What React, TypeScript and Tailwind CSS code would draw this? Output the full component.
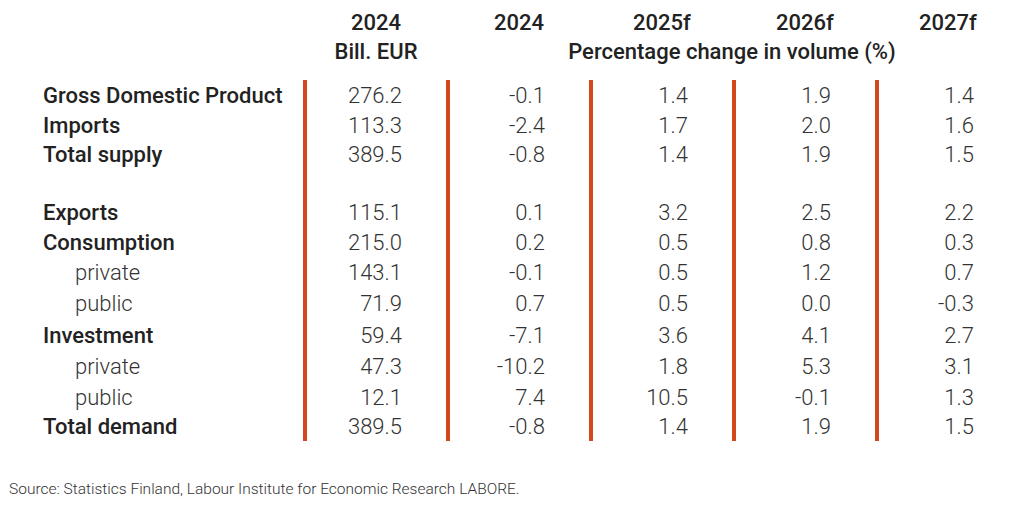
import React from "react";

type Row = {
  label: string;
  sub?: boolean;
  h: string;
  values: string[];
};

const rows: (Row | null)[] = [
  { label: "Gross Domestic Product", h: "h-[31px]", values: ["276.2", "-0.1", "1.4", "1.9", "1.4"] },
  { label: "Imports", h: "h-[29px]", values: ["113.3", "-2.4", "1.7", "2.0", "1.6"] },
  { label: "Total supply", h: "h-[29px]", values: ["389.5", "-0.8", "1.4", "1.9", "1.5"] },
  null, // tyhjä väli
  { label: "Exports", h: "h-[29px]", values: ["115.1", "0.1", "3.2", "2.5", "2.2"] },
  { label: "Consumption", h: "h-[30px]", values: ["215.0", "0.2", "0.5", "0.8", "0.3"] },
  { label: "private", sub: true, h: "h-[31px]", values: ["143.1", "-0.1", "0.5", "1.2", "0.7"] },
  { label: "public", sub: true, h: "h-[31px]", values: ["71.9", "0.7", "0.5", "0.0", "-0.3"] },
  { label: "Investment", h: "h-[32px]", values: ["59.4", "-7.1", "3.6", "4.1", "2.7"] },
  { label: "private", sub: true, h: "h-[31px]", values: ["47.3", "-10.2", "1.8", "5.3", "3.1"] },
  { label: "public", sub: true, h: "h-[30px]", values: ["12.1", "7.4", "10.5", "-0.1", "1.3"] },
  { label: "Total demand", h: "h-[29px]", values: ["389.5", "-0.8", "1.4", "1.9", "1.5"] },
];

const years = ["2024", "2024", "2025f", "2026f", "2027f"];

export default function App() {
  return (
    <div
      className="w-[1024px] h-[506px] bg-white overflow-hidden text-[#222]"
      style={{ fontFamily: "Roboto, 'Liberation Sans', sans-serif" }}
    >
      {/* otsikot */}
      <div className="grid grid-cols-[303px_repeat(5,143px)] pt-[8px] text-[22px] leading-[29px] font-medium">
        <div />
        {years.map((y, i) => (
          <div key={i} className="text-center pl-[3px]">
            {y}
          </div>
        ))}
        <div />
        <div className="text-center pl-[3px]">Bill. EUR</div>
        <div className="col-span-4 text-center">Percentage change in volume (%)</div>
      </div>

      {/* taulukko */}
      <div className="grid grid-cols-[303px_repeat(5,143px)] mt-[14px] text-[22px]">
        {rows.map((row, r) =>
          row ? (
            <React.Fragment key={r}>
              <div
                className={`${row.h} flex items-center ${
                  row.sub ? "pl-[75px] font-light text-[#333]" : "pl-[43px] font-medium"
                }`}
              >
                {row.label}
              </div>
              {row.values.map((v, c) => (
                <div
                  key={c}
                  className={`${row.h} flex items-center justify-end pr-[44px] border-l-4 border-[#d2471b] font-light text-[#333]`}
                >
                  {v}
                </div>
              ))}
            </React.Fragment>
          ) : (
            <React.Fragment key={r}>
              <div className="h-[29px]" />
              {years.map((_, c) => (
                <div key={c} className="h-[29px] border-l-4 border-[#d2471b]" />
              ))}
            </React.Fragment>
          )
        )}
      </div>

      <div className="mt-[38px] pl-[9px] text-[15.5px] leading-[20px] font-light text-[#333]">
        Source: Statistics Finland, Labour Institute for Economic Research LABORE.
      </div>
    </div>
  );
}
